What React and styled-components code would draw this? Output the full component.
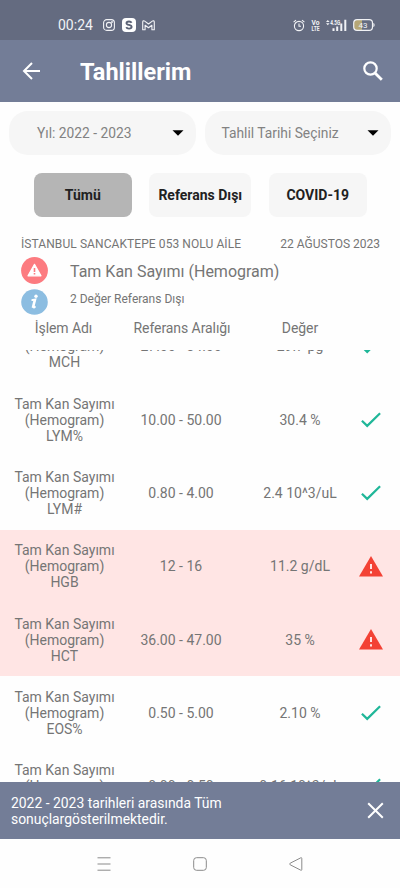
import styled, { createGlobalStyle } from "styled-components";

const GlobalStyle = createGlobalStyle`
    * {
        box-sizing: border-box;
    }

    body {
        margin: 0;
        background-color: #fefefe;
        font-family: Roboto, "Liberation Sans", sans-serif;
        color: #757575;
    }

    button {
        border: none;
        padding: 0;
        background: none;
        font-family: inherit;
        color: inherit;
    }

    svg {
        display: block;
        flex-shrink: 0;
    }
`

const Screen = styled.div`
    width: 400px;
    height: 888px;
    overflow: hidden;
    display: flex;
    flex-direction: column;
`

const StatusBar = styled.div`
    height: 40px;
    flex-shrink: 0;
    padding: 10px 25px 0 58px;
    display: flex;
    align-items: center;
    background-color: #646b80;
    color: #f1f2f5;
`

const Clock = styled.span`
    width: 45px;
    font-size: 14px;
`

const StatusIcons = styled.div`
    display: flex;
    align-items: center;
    gap: ${props => props.$gap}px;
    margin-left: ${props => props.$end ? "auto" : "0"};
`

const Header = styled.header`
    height: 62px;
    flex-shrink: 0;
    padding: 0 17px 0 19px;
    display: flex;
    align-items: center;
    background-color: #737d97;
    color: #fff;

    h1 {
        flex: 1;
        margin: 2px 0 0 37px;
        font-size: 23.5px;
        line-height: 28px;
        font-weight: 700;
    }
`

const Selects = styled.div`
    display: grid;
    grid-template-columns: 1fr 1fr;
    gap: 9px;
    padding: 9px 9px 0;
`

const Select = styled.button`
    height: 44px;
    padding: 0 12px 0 ${props => props.$left}px;
    display: flex;
    align-items: center;
    justify-content: space-between;
    border-radius: 19px;
    background-color: #f6f6f6;
    color: #828282;
    font-size: 13.8px;
    white-space: nowrap;
`

const Filters = styled.div`
    display: flex;
    gap: 17.6px;
    padding: 18px 33px 0 34px;
`

const Filter = styled.button`
    flex: 0 0 ${props => props.$width}px;
    height: 44px;
    border-radius: 8px;
    background-color: ${props => props.$active ? "#b5b5b5" : "#f6f6f6"};
    color: #212121;
    font-size: 14px;
    font-weight: 700;
    white-space: nowrap;
`

const Place = styled.div`
    display: flex;
    justify-content: space-between;
    padding: 19px 20px 0 21px;
    font-size: 12px;
    line-height: 16px;

    span:first-child {
        letter-spacing: 0.08px;
    }
`

const Summary = styled.div`
    padding: 3px 21px 0;
`

const SummaryRow = styled.div`
    display: flex;
    align-items: center;
    gap: 22px;
    height: ${props => props.$height}px;
    font-size: ${props => props.$size}px;

    span {
        padding-bottom: ${props => props.$lift}px;
    }

    svg {
        margin-top: ${props => props.$lift ? 0 : -2}px;
    }
`

const Columns = styled.div`
    display: grid;
    grid-template-columns: 129px 104px 1fr 30px;
    align-items: center;
    padding-right: 14px;
    text-align: center;
    font-size: 14px;

    > span:nth-child(3) {
        padding-left: 11px;
    }
`

const TableHead = styled(Columns)`
    height: 33px;
    flex-shrink: 0;
    padding-bottom: 11px;

    span {
        letter-spacing: -0.07px;
        white-space: nowrap;
    }

    span:nth-child(1) {
        padding-right: 2px;
    }

    span:nth-child(2) {
        padding-left: 2px;
    }
`

const List = styled.div`
    height: 432px;
    flex-shrink: 0;
    overflow: hidden;
`

const Rows = styled.div`
    margin-top: -40.3px;
`

const Row = styled(Columns)`
    height: 73.3px;
    background-color: ${props => props.$out ? "#ffe5e4" : "transparent"};
    line-height: 16px;

    svg {
        justify-self: center;
    }
`

const Name = styled.span`
    display: flex;
    flex-direction: column;
`

const Notice = styled.div`
    height: 57px;
    flex-shrink: 0;
    padding: 0 16px 0 11px;
    display: flex;
    align-items: center;
    justify-content: space-between;
    background-color: #737d97;
    color: #fff;
    font-size: 13.9px;
    line-height: 16px;

    p {
        margin: 0;
        width: 230px;
    }
`

const NavBar = styled.nav`
    flex: 1;
    padding: 0 97px;
    display: flex;
    align-items: center;
    justify-content: space-between;
`

const results = [
    { code: "MCH", range: "27.00 - 34.00", value: "29.7 pg" },
    { code: "LYM%", range: "10.00 - 50.00", value: "30.4 %" },
    { code: "LYM#", range: "0.80 - 4.00", value: "2.4 10^3/uL" },
    { code: "HGB", range: "12 - 16", value: "11.2 g/dL", out: true },
    { code: "HCT", range: "36.00 - 47.00", value: "35 %", out: true },
    { code: "EOS%", range: "0.50 - 5.00", value: "2.10 %" },
    { code: "EOS#", range: "0.00 - 0.50", value: "0.16 10^3/uL" },
]

function InstagramIcon(){
    return (
        <svg width="12" height="12" viewBox="0 0 12 12" fill="none" stroke="currentColor" strokeWidth="1.1">
            <rect x="0.6" y="0.6" width="10.8" height="10.8" rx="3.2" />
            <circle cx="6" cy="6" r="2.6" />
            <circle cx="9" cy="3" r="0.4" />
        </svg>
    )
}

function SkypeIcon(){
    return (
        <svg width="14" height="14" viewBox="0 0 14 14">
            <rect width="14" height="14" rx="4" fill="#fff" />
            <path d="M9.6 4.8C9 3.8 8 3.5 7 3.5c-1.4 0-2.5.6-2.5 1.7C4.5 7.5 9.6 6.3 9.6 8.8c0 1.2-1.2 1.8-2.6 1.8-1.2 0-2.3-.5-2.7-1.5" fill="none" stroke="#5b6276" strokeWidth="1.9" />
        </svg>
    )
}

function MailIcon(){
    return (
        <svg width="13" height="11" viewBox="0 0 13 11" fill="none" stroke="currentColor" strokeWidth="1.1" strokeLinejoin="round">
            <path d="M.7 2v7.8h2.400V5.300l3.400 2.500 3.400-2.500v4.500h2.400V2c0-1.200-1.200-1.500-2-.9L6.500 4 2.700 1.100C1.900.5.700.8.700 2z" />
        </svg>
    )
}

function AlarmIcon(){
    return (
        <svg width="12" height="13" viewBox="0 0 12 13" fill="none" stroke="currentColor" strokeWidth="1.1">
            <circle cx="6" cy="7" r="4.6" />
            <path d="M6 4.500V7.300H8M.6 3.200 3 1.100M11.400 3.200 9 1.100" />
        </svg>
    )
}

function VolteIcon(){
    return (
        <svg width="9" height="13" viewBox="0 0 9 13" fill="currentColor" fontWeight="700" overflow="visible">
            <text x="0.5" y="6" fontSize="7" textLength="8" lengthAdjust="spacingAndGlyphs">Vo</text>
            <text x="0.5" y="12.3" fontSize="7" textLength="8" lengthAdjust="spacingAndGlyphs">LTE</text>
        </svg>
    )
}

function SignalIcon(){
    return (
        <svg width="21" height="13" viewBox="0 0 21 13" fill="currentColor">
            <path d="M0 2.900 1.800.9l1.800 2zM0 4.300l1.800 2 1.800-2z" />
            <text x="4.2" y="6.3" fontSize="6.5" fontWeight="700" textLength="10" lengthAdjust="spacingAndGlyphs">4.5G</text>
            <path d="M6.500 9.300h2V12h-2zM10.200 7.500h2V12h-2zM14.300 4.500h2V12h-2zM18.300 .8h2V12h-2z" />
        </svg>
    )
}

function BatteryIcon(){
    return (
        <svg width="22" height="12" viewBox="0 0 22 12">
            <path d="M4 1h5v10H4a3 3 0 0 1-3-3V4a3 3 0 0 1 3-3z" fill="#b5a676" />
            <rect x="0.7" y="0.7" width="18.8" height="10.6" rx="3.4" fill="none" stroke="currentColor" strokeWidth="1.2" />
            <path d="M20.400 4c1.600.3 1.600 3.700 0 4z" fill="currentColor" />
            <text x="5.5" y="8.8" fontSize="8" fill="currentColor">43</text>
        </svg>
    )
}

function BackIcon(){
    return (
        <svg width="24" height="24" viewBox="0 0 24 24" fill="none" stroke="currentColor" strokeWidth="2">
            <path d="M21 12H5M13 4l-8 8 8 8" />
        </svg>
    )
}

function SearchIcon(){
    return (
        <svg width="20" height="20" viewBox="0 0 20 20" fill="none" stroke="currentColor" strokeWidth="2.2">
            <circle cx="7.5" cy="7.5" r="6.2" />
            <path d="m12 12 6.800 6.800" strokeWidth="2.8" />
        </svg>
    )
}

function Caret(){
    return (
        <svg width="12" height="6" viewBox="0 0 12 6">
            <path d="M.5.300h11L6 5.700z" fill="#000" />
        </svg>
    )
}

function AlertBadge(){
    return (
        <svg width="27" height="27" viewBox="0 0 27 27">
            <circle cx="13.5" cy="13.5" r="13.4" fill="#fc7b80" />
            <path d="M13.500 7.300 20 18.800H7z" fill="#fff" stroke="#fff" strokeWidth="1.2" strokeLinejoin="round" />
            <path d="M12.700 11h1.600v4h-1.600zM12.700 16h1.600v1.600h-1.600z" fill="#fc7b80" />
        </svg>
    )
}

function InfoBadge(){
    return (
        <svg width="27" height="26" viewBox="0 0 27 26">
            <ellipse cx="13.5" cy="13" rx="13.3" ry="12.8" fill="#8cbde1" />
            <circle cx="15" cy="7.3" r="1.7" fill="#fff" />
            <path d="M10.500 11.200c1.500 0 2.700-.5 4-.8l-2 7.600c-.2 1 .8.700 2-.6" fill="none" stroke="#fff" strokeWidth="1.7" />
            <path d="m13.600 10.800-2 8" stroke="#fff" strokeWidth="2" />
        </svg>
    )
}

function CheckIcon(){
    return (
        <svg width="20" height="16" viewBox="0 0 20 16" fill="none" stroke="#20b799" strokeWidth="2.2">
            <path d="m.9 8.700 5.300 5.200L19.100 1.300" />
        </svg>
    )
}

function WarningIcon(){
    return (
        <svg width="24" height="21" viewBox="0 0 24 21">
            <path d="M12 0 24 20.600H0z" fill="#f34235" />
            <path d="M11 8h2v5h-2zM11 15.300h2v2.100h-2z" fill="#ffe5e4" />
        </svg>
    )
}

function CloseIcon(){
    return (
        <svg width="17" height="17" viewBox="0 0 17 17" stroke="currentColor" strokeWidth="2">
            <path d="m1.200 1.200 14.600 14.600M15.800 1.200 1.200 15.800" />
        </svg>
    )
}

function NavIcons(){
    return (
        <>
            <svg width="14" height="14" viewBox="0 0 14 14" stroke="#8a8a8a" strokeWidth="1">
                <path d="M.5.800h13M.5 7h13M.5 13.200h13" />
            </svg>
            <svg width="14" height="14" viewBox="0 0 14 14" fill="none" stroke="#8a8a8a">
                <rect x="0.7" y="0.7" width="12.6" height="12.6" rx="2.8" />
            </svg>
            <svg width="14" height="14" viewBox="0 0 14 14" fill="none" stroke="#8a8a8a" strokeLinejoin="round">
                <path d="M1.200 6.200 11.800.800q1-.4 1 .7v11q0 1.100-1 .7L1.200 7.800q-1.200-.8 0-1.600z" />
            </svg>
        </>
    )
}

export default function App(){
    return (
        <>
            <GlobalStyle />
            <Screen>
                <StatusBar>
                    <Clock>00:24</Clock>
                    <StatusIcons $gap={6.5}>
                        <InstagramIcon />
                        <SkypeIcon />
                        <MailIcon />
                    </StatusIcons>
                    <StatusIcons $gap={6} $end>
                        <AlarmIcon />
                        <VolteIcon />
                        <SignalIcon />
                        <BatteryIcon />
                    </StatusIcons>
                </StatusBar>
                <Header>
                    <BackIcon />
                    <h1>Tahlillerim</h1>
                    <SearchIcon />
                </Header>
                <Selects>
                    <Select $left={28}>Yıl: 2022 - 2023<Caret /></Select>
                    <Select $left={17}>Tahlil Tarihi Seçiniz<Caret /></Select>
                </Selects>
                <Filters>
                    <Filter $width={97.7} $active>Tümü</Filter>
                    <Filter $width={102}>Referans Dışı</Filter>
                    <Filter $width={97.7}>COVID-19</Filter>
                </Filters>
                <Place>
                    <span>İSTANBUL SANCAKTEPE 053 NOLU AİLE</span>
                    <span>22 AĞUSTOS 2023</span>
                </Place>
                <Summary>
                    <SummaryRow $height={32} $size={16} $lift={0}>
                        <AlertBadge />
                        <span>Tam Kan Sayımı (Hemogram)</span>
                    </SummaryRow>
                    <SummaryRow $height={30} $size={12} $lift={6}>
                        <InfoBadge />
                        <span>2 Değer Referans Dışı</span>
                    </SummaryRow>
                </Summary>
                <TableHead>
                    <span>İşlem Adı</span>
                    <span>Referans Aralığı</span>
                    <span>Değer</span>
                </TableHead>
                <List>
                    <Rows>
                        {results.map(result => (
                            <Row key={result.code} $out={result.out}>
                                <Name>
                                    <span>Tam Kan Sayımı</span>
                                    <span>(Hemogram)</span>
                                    <span>{result.code}</span>
                                </Name>
                                <span>{result.range}</span>
                                <span>{result.value}</span>
                                {result.out ? <WarningIcon /> : <CheckIcon />}
                            </Row>
                        ))}
                    </Rows>
                </List>
                <Notice>
                    <p>2022 - 2023 tarihleri arasında Tüm sonuçlargösterilmektedir.</p>
                    <CloseIcon />
                </Notice>
                <NavBar>
                    <NavIcons />
                </NavBar>
            </Screen>
        </>
    )
}
